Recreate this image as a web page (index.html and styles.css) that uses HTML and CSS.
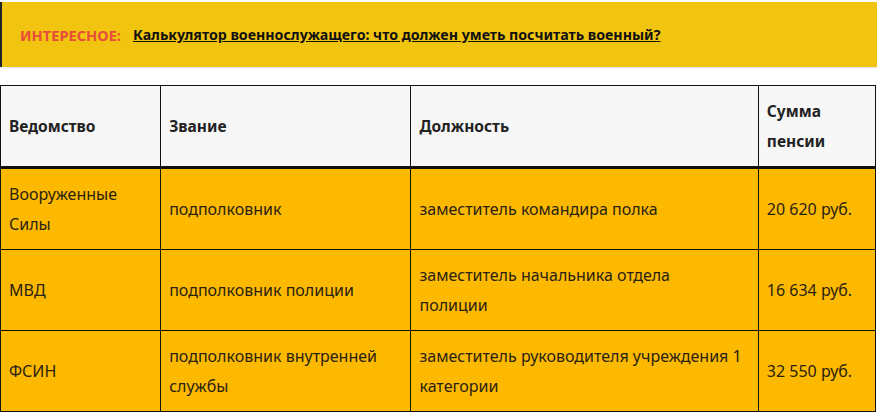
FILE: index.html
```html
<!DOCTYPE html>
<html lang="ru">
<head>
<meta charset="utf-8">
<link rel="stylesheet" href="styles.css">
</head>
<body>
<div class="page">
  <div class="note">
    <span class="note-label">ИНТЕРЕСНОЕ:</span>
    <a class="note-link" href="#">Калькулятор военнослужащего: что должен уметь посчитать военный?</a>
  </div>
  <table class="pension">
    <thead>
      <tr>
        <th class="c1">Ведомство</th>
        <th class="c2">Звание</th>
        <th class="c3">Должность</th>
        <th class="c4">Сумма пенсии</th>
      </tr>
    </thead>
    <tbody>
      <tr>
        <td>Вооруженные Силы</td>
        <td>подполковник</td>
        <td>заместитель командира полка</td>
        <td>20 620 руб.</td>
      </tr>
      <tr>
        <td>МВД</td>
        <td>подполковник полиции</td>
        <td>заместитель начальника отдела<br>полиции</td>
        <td>16 634 руб.</td>
      </tr>
      <tr>
        <td>ФСИН</td>
        <td>подполковник внутренней службы</td>
        <td>заместитель руководителя учреждения 1 категории</td>
        <td>32 550 руб.</td>
      </tr>
    </tbody>
  </table>
</div>
</body>
</html>
```
FILE: styles.css
```css
html, body {
  margin: 0;
  padding: 0;
  background: #ffffff;
}
.page {
  padding-top: 2px;
  font-family: "Noto Sans", "Open Sans", sans-serif;
  color: #222;
}
.note {
  height: 65px;
  box-sizing: border-box;
  background: #f1c40f;
  border-left: 2px solid #222;
  display: flex;
  align-items: center;
  padding: 0 0 0 18px;
  box-shadow: 0 1px 2px rgba(0,0,0,0.12);
}
.note-label {
  color: #e74c3c;
  font-weight: 700;
  font-size: 14.6px;
  margin-right: 12px;
}
.note-link {
  color: #111;
  font-weight: 700;
  font-size: 14.2px;
  text-decoration: underline;
}
.pension {
  margin-top: 18px;
  width: 876px;
  border-collapse: collapse;
  font-size: 16px;
  line-height: 30px;
}
.pension th, .pension td {
  border: 1px solid #111;
  padding: 10px 8px;
  text-align: left;
  vertical-align: middle;
}
.pension th {
  background: #f7f7f7;
  font-weight: 700;
  font-size: 15.5px;
  border-bottom: 3px solid #111;
  height: 59px;
}
.pension td {
  background: #fdb900;
  font-weight: 400;
  color: #2a2210;
  height: 59px;
}
.c1 { width: 143px; }
.c2 { width: 233px; }
.c3 { width: 330px; }
.c4 { width: 100px; }
```
